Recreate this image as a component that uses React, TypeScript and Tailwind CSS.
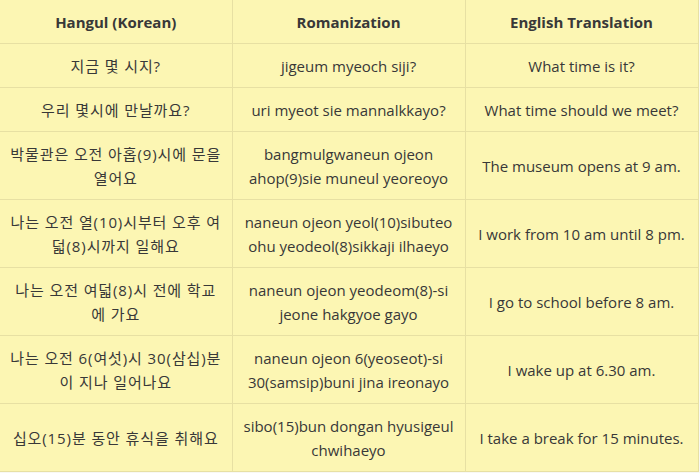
const rows: [string, string, string][] = [
  ['지금 몇 시지?', 'jigeum myeoch siji?', 'What time is it?'],
  ['우리 몇시에 만날까요?', 'uri myeot sie mannalkkayo?', 'What time should we meet?'],
  ['박물관은 오전 아홉(9)시에 문을 열어요', 'bangmulgwaneun ojeon ahop(9)sie muneul yeoreoyo', 'The museum opens at 9 am.'],
  ['나는 오전 열(10)시부터 오후 여덟(8)시까지 일해요', 'naneun ojeon yeol(10)sibuteo ohu yeodeol(8)sikkaji ilhaeyo', 'I work from 10 am until 8 pm.'],
  ['나는 오전 여덟(8)시 전에 학교에 가요', 'naneun ojeon yeodeom(8)-si jeone hakgyoe gayo', 'I go to school before 8 am.'],
  ['나는 오전 6(여섯)시 30(삼십)분이 지나 일어나요', 'naneun ojeon 6(yeoseot)-si 30(samsip)buni jina ireonayo', 'I wake up at 6.30 am.'],
  ['십오(15)분 동안 휴식을 취해요', 'sibo(15)bun dongan hyusigeul chwihaeyo', 'I take a break for 15 minutes.'],
];

const cell = 'border-r border-b border-[#e7e0a3] py-[9.5px] text-center align-middle';

export default function App() {
  return (
    <div className="w-[700px] h-[473px] bg-[#f8f8f4] font-['Open_Sans','Noto_Sans_CJK_KR',sans-serif] text-[15px] leading-6 text-[#383838]">
      <table className="w-[698px] table-fixed border-collapse bg-[#fcf6b3]">
        <colgroup>
          <col className="w-[232px]" />
          <col className="w-[233px]" />
          <col className="w-[233px]" />
        </colgroup>
        <thead>
          <tr>
            <th className={`${cell} px-3 font-bold`}>Hangul (Korean)</th>
            <th className={`${cell} px-3 font-bold`}>Romanization</th>
            <th className={`${cell} px-3 font-bold`}>English Translation</th>
          </tr>
        </thead>
        <tbody>
          {rows.map((r, i) => (
            <tr key={i}>
              <td className={`${cell} px-[10px] tracking-[0.9px]`}>{r[0]}</td>
              <td className={`${cell} px-[6px]`}>{r[1]}</td>
              <td className={`${cell} px-3`}>{r[2]}</td>
            </tr>
          ))}
        </tbody>
      </table>
    </div>
  );
}
